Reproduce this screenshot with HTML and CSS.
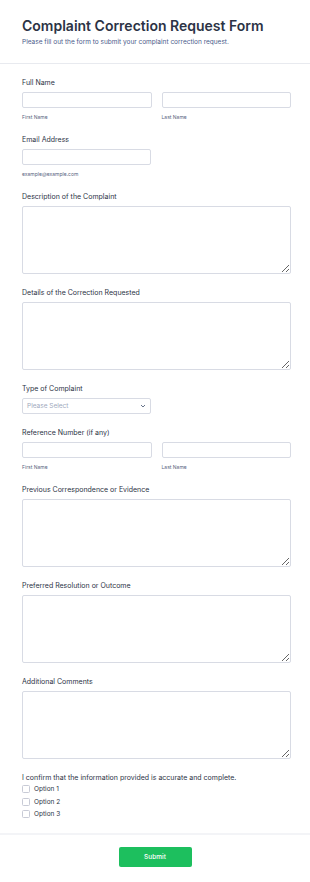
FILE: index.html
```html
<!DOCTYPE html>
<html lang="en">
<head>
    <meta charset="UTF-8">
    <meta name="viewport" content="width=device-width, initial-scale=1.0">
    <title>Complaint Correction Request Form</title>
    <link rel="stylesheet" href="styles.css">
</head>
<body>
    <div class="header">
        <h1>Complaint Correction Request Form</h1>
        <p class="subtitle">Please fill out the form to submit your complaint correction request.</p>
    </div>

    <form class="form">
        <div class="field">
            <label class="label">Full Name</label>
            <div class="row">
                <div class="col">
                    <input type="text" class="input">
                    <span class="sublabel">First Name</span>
                </div>
                <div class="col">
                    <input type="text" class="input">
                    <span class="sublabel">Last Name</span>
                </div>
            </div>
        </div>

        <div class="field">
            <label class="label">Email Address</label>
            <div class="col half">
                <input type="email" class="input">
                <span class="sublabel">example@example.com</span>
            </div>
        </div>

        <div class="field">
            <label class="label">Description of the Complaint</label>
            <textarea class="textarea"></textarea>
        </div>

        <div class="field">
            <label class="label">Details of the Correction Requested</label>
            <textarea class="textarea"></textarea>
        </div>

        <div class="field">
            <label class="label">Type of Complaint</label>
            <div class="select half">
                <span>Please Select</span>
                <svg width="6" height="4" viewBox="0 0 6 4"><path d="M1 1l2 2 2-2" fill="none" stroke="#57647e" stroke-width="0.9"/></svg>
            </div>
        </div>

        <div class="field">
            <label class="label">Reference Number (if any)</label>
            <div class="row">
                <div class="col">
                    <input type="text" class="input">
                    <span class="sublabel">First Name</span>
                </div>
                <div class="col">
                    <input type="text" class="input">
                    <span class="sublabel">Last Name</span>
                </div>
            </div>
        </div>

        <div class="field">
            <label class="label">Previous Correspondence or Evidence</label>
            <textarea class="textarea"></textarea>
        </div>

        <div class="field">
            <label class="label">Preferred Resolution or Outcome</label>
            <textarea class="textarea"></textarea>
        </div>

        <div class="field">
            <label class="label">Additional Comments</label>
            <textarea class="textarea"></textarea>
        </div>

        <div class="field last">
            <label class="label confirm">I confirm that the information provided is accurate and complete.</label>
            <div class="option"><span class="box"></span>Option 1</div>
            <div class="option"><span class="box"></span>Option 2</div>
            <div class="option"><span class="box"></span>Option 3</div>
        </div>
    </form>

    <div class="footer">
        <button type="button" class="submit">Submit</button>
    </div>
</body>
</html>
```

FILE: styles.css
```css
body {
    margin: 0;
    font-family: Inter, "Liberation Sans", sans-serif;
    background: #fff;
    color: #2c3345;
}

.header {
    padding: 17px 22px 16px;
    border-bottom: 1px solid #e8eaef;
}

h1 {
    margin: 0;
    font-size: 14px;
    font-weight: 600;
    line-height: 18px;
    color: #2c3345;
}

.subtitle {
    margin: 3px 0 0;
    font-size: 6.5px;
    line-height: 9px;
    color: #4a5b8a;
}

.form {
    padding: 14px 19px 12px 22px;
}

.field {
    margin-bottom: 14px;
}

.field.last {
    margin-bottom: 0;
}

.label {
    display: block;
    font-size: 7px;
    font-weight: 400;
    line-height: 10px;
    margin-bottom: 4px;
    color: #2c3345;
}

.label.confirm {
    margin-bottom: 0;
}

.row {
    display: flex;
    gap: 10px;
}

.col {
    display: flex;
    flex-direction: column;
    flex: 1;
}

.half {
    width: 129px;
}

.input {
    box-sizing: border-box;
    height: 16px;
    width: 100%;
    margin: 0;
    border: 1px solid #d8dbe4;
    border-radius: 2px;
    background: #fff;
    padding: 0 4px;
}

.sublabel {
    margin-top: 5px;
    font-size: 5px;
    line-height: 8px;
    color: #57647e;
}

.textarea {
    display: block;
    box-sizing: border-box;
    width: 100%;
    height: 68px;
    margin: 0;
    border: 1px solid #d8dbe4;
    border-radius: 2px;
    background: #fff;
}

.select {
    box-sizing: border-box;
    height: 16px;
    border: 1px solid #d8dbe4;
    border-radius: 2px;
    display: flex;
    align-items: center;
    justify-content: space-between;
    padding: 0 4px;
    font-size: 6.5px;
    color: #a0a8bc;
}

.option {
    display: flex;
    align-items: center;
    height: 12.5px;
    font-size: 6.5px;
    color: #2c3345;
}

.box {
    box-sizing: border-box;
    width: 8px;
    height: 8px;
    border: 1px solid #c8cbd6;
    border-radius: 1.5px;
    margin-right: 4px;
}

.footer {
    border-top: 2px solid #f3f4f7;
    padding: 12px 0;
    display: flex;
    justify-content: center;
}

.submit {
    width: 73px;
    height: 20px;
    border: none;
    border-radius: 2px;
    background: #1dbf5e;
    color: #fff;
    font-family: Inter, "Liberation Sans", sans-serif;
    font-size: 6.5px;
    font-weight: 500;
}
```
